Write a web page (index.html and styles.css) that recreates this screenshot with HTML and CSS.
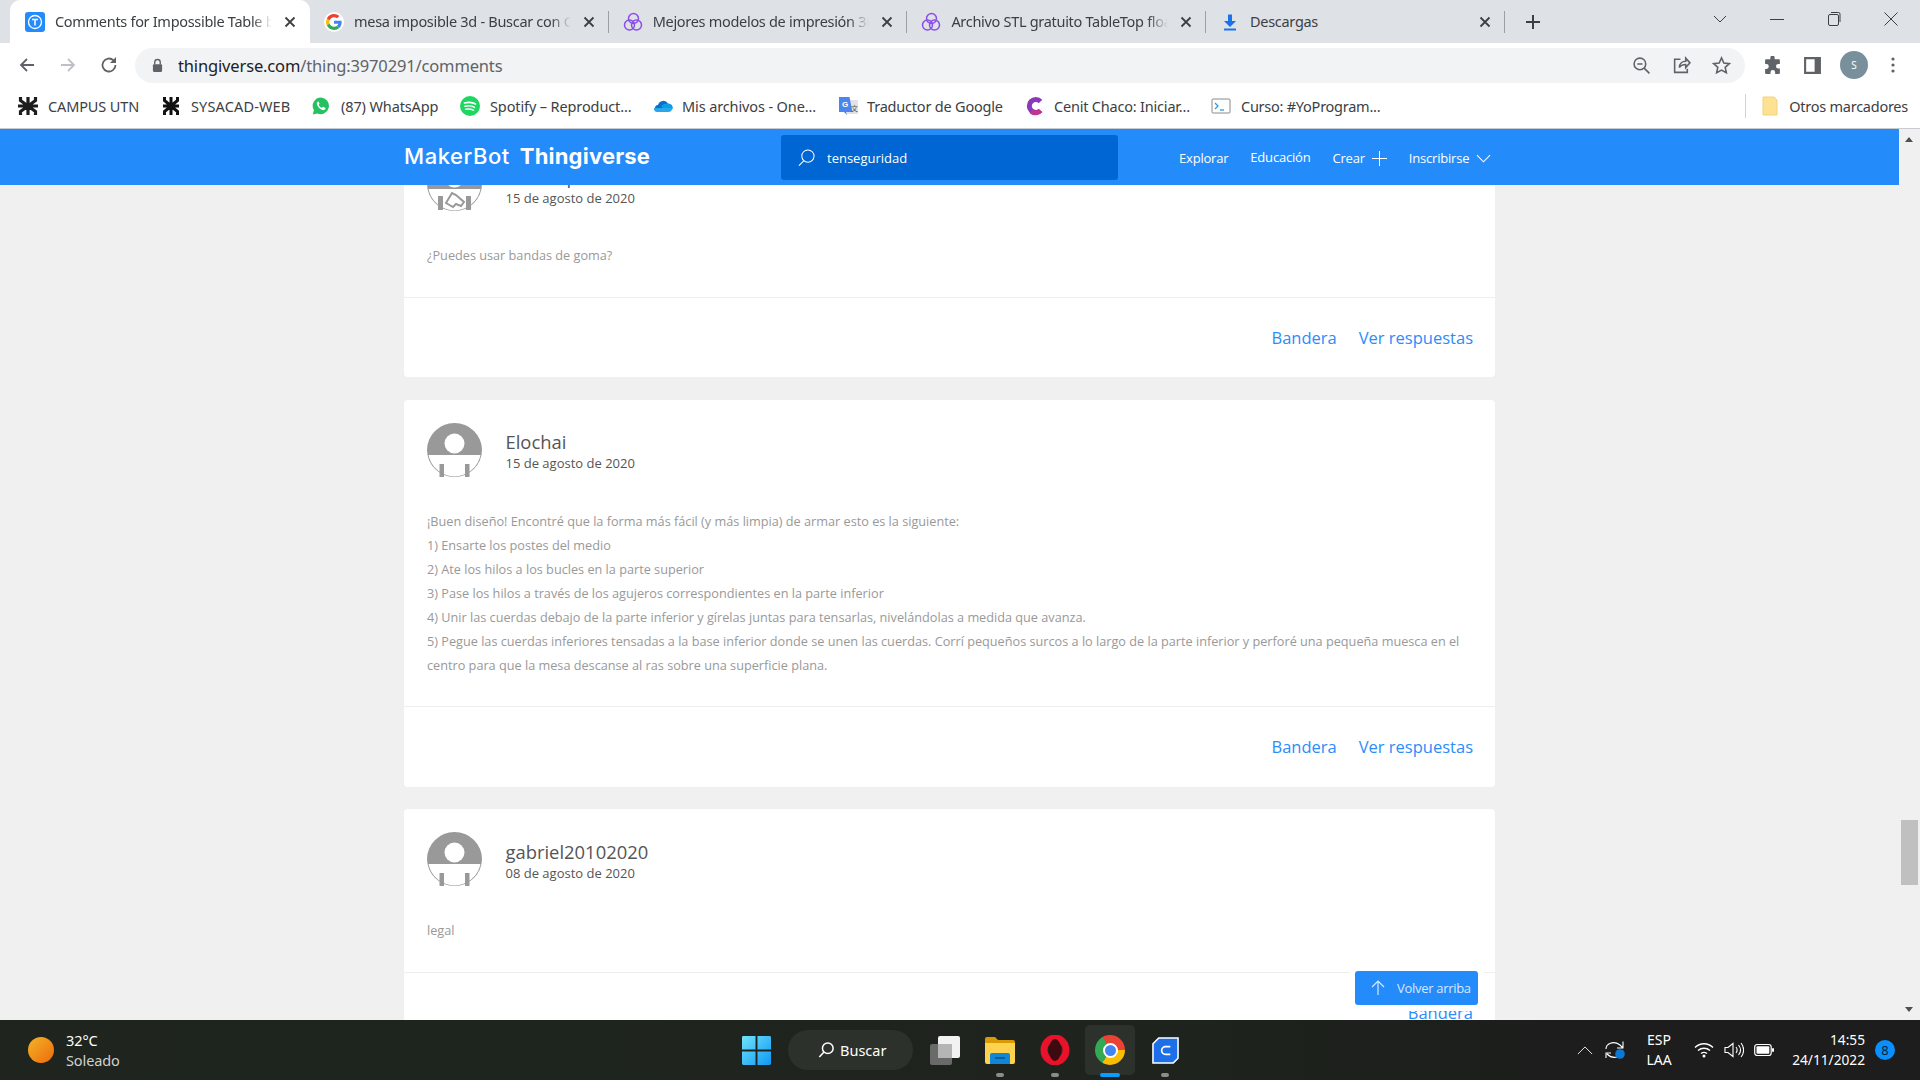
FILE: index.html
```html
<!DOCTYPE html>
<html lang="es">
<head>
<meta charset="utf-8">
<title>Comments for Impossible Table</title>
<link rel="stylesheet" href="styles.css">
</head>
<body>
<div class="tabstrip">
  <div class="tab tab-active">
    <svg class="fav" viewBox="0 0 20 20"><rect width="20" height="20" rx="3" fill="#248bfb"/><circle cx="10" cy="10" r="6.5" fill="none" stroke="#fff" stroke-width="1.3"/><path d="M7 7.4h6M10 7.4v6" stroke="#fff" stroke-width="1.5" fill="none"/></svg>
    <span class="tab-title">Comments for Impossible Table by TensegrityFan</span>
    <svg class="tab-x" viewBox="0 0 12 12"><path d="M1.5 1.5l9 9M10.5 1.5l-9 9"/></svg>
  </div>
  <div class="tab">
    <svg class="fav" viewBox="-6 -6 60 60"><circle cx="24" cy="24" r="30" fill="#fff"/><path fill="#EA4335" d="M24 9.5c3.54 0 6.71 1.22 9.21 3.6l6.85-6.85C35.9 2.38 30.47 0 24 0 14.62 0 6.51 5.38 2.56 13.22l7.98 6.19C12.43 13.72 17.74 9.5 24 9.5z"/><path fill="#4285F4" d="M46.98 24.55c0-1.57-.15-3.09-.38-4.55H24v9.02h12.94c-.58 2.96-2.26 5.48-4.78 7.18l7.73 6c4.51-4.18 7.09-10.36 7.09-17.65z"/><path fill="#FBBC05" d="M10.53 28.59c-.48-1.45-.76-2.99-.76-4.59s.27-3.14.76-4.59l-7.98-6.19C.92 16.46 0 20.12 0 24c0 3.88.92 7.54 2.56 10.78l7.97-6.19z"/><path fill="#34A853" d="M24 48c6.48 0 11.93-2.13 15.89-5.81l-7.73-6c-2.15 1.45-4.92 2.3-8.16 2.3-6.26 0-11.57-4.22-13.47-9.91l-7.98 6.19C6.51 42.62 14.62 48 24 48z"/></svg>
    <span class="tab-title">mesa imposible 3d - Buscar con Google</span>
    <svg class="tab-x" viewBox="0 0 12 12"><path d="M1.5 1.5l9 9M10.5 1.5l-9 9"/></svg>
  </div>
  <div class="tab">
    <svg class="fav" viewBox="0 0 20 20" fill="none" stroke="#8b4fe8" stroke-width="1.5"><circle cx="10.500" cy="6.500" r="5"/><circle cx="6.500" cy="13" r="5"/><circle cx="13.500" cy="13" r="5"/></svg>
    <span class="tab-title">Mejores modelos de impresión 3D para</span>
    <svg class="tab-x" viewBox="0 0 12 12"><path d="M1.5 1.5l9 9M10.5 1.5l-9 9"/></svg>
  </div>
  <div class="tab">
    <svg class="fav" viewBox="0 0 20 20" fill="none" stroke="#8b4fe8" stroke-width="1.5"><circle cx="10.500" cy="6.500" r="5"/><circle cx="6.500" cy="13" r="5"/><circle cx="13.500" cy="13" r="5"/></svg>
    <span class="tab-title">Archivo STL gratuito TableTop floating</span>
    <svg class="tab-x" viewBox="0 0 12 12"><path d="M1.5 1.5l9 9M10.5 1.5l-9 9"/></svg>
  </div>
  <div class="tab tab-last">
    <svg class="fav" viewBox="0 0 20 20" fill="#1a73e8"><path d="M8 2.500h4v6.500h4l-6 6-6-6h4z"/><rect x="4" y="16.500" width="12" height="2"/></svg>
    <span class="tab-title">Descargas</span>
    <svg class="tab-x" viewBox="0 0 12 12"><path d="M1.5 1.5l9 9M10.5 1.5l-9 9"/></svg>
  </div>
  <svg class="newtab" viewBox="0 0 16 16"><path d="M8 1v14M1 8h14"/></svg>
  <div class="winctl">
    <svg class="win-ic" viewBox="0 0 16 16"><path d="M2 5l6 6 6-6"/></svg>
    <svg class="win-ic" viewBox="0 0 16 16"><path d="M1 8.500h14"/></svg>
    <svg class="win-ic" viewBox="0 0 16 16"><rect x="2.500" y="3.500" width="10" height="11" rx="1.500"/><path d="M5 1.500h7.500a1.500 1.500 0 0 1 1.500 1.500v8"/></svg>
    <svg class="win-ic" viewBox="0 0 16 16"><path d="M1.500 1.500l13 13M14.500 1.500l-13 13"/></svg>
  </div>
</div>

<div class="toolbar">
  <svg class="nav-ic" viewBox="0 0 18 18"><path d="M16 9H3M9 3L3 9l6 6"/></svg>
  <svg class="nav-ic nav-off" viewBox="0 0 18 18"><path d="M2 9h13M9 3l6 6-6 6"/></svg>
  <svg class="nav-ic" viewBox="0 0 18 18"><path d="M15.500 9a6.500 6.500 0 1 1-2-4.700"/><path class="solid" d="M16 1v6h-6z"/></svg>
  <div class="omnibox">
    <svg class="lock" viewBox="0 0 12 16"><path d="M3 7V4.500a3 3 0 0 1 6 0V7" fill="none" stroke="#5f6368" stroke-width="1.500"/><rect x="1" y="6.500" width="10" height="8.500" rx="1.200" fill="#5f6368"/></svg>
    <span class="url"><span class="url-host">thingiverse.com</span>/thing:3970291/comments</span>
    <span class="omni-spacer"></span>
    <svg class="omni-ic" viewBox="0 0 18 18"><circle cx="7.500" cy="7.500" r="5.500"/><path d="M5 7.500h5M11.500 11.500l5 5"/></svg>
    <svg class="omni-ic" viewBox="0 0 18 18"><path d="M8 3H2.500v12.500h12V12M7 11c0-4 3-6 6-6V2l4 4.500-4 4.500V8c-3 0-5 1-6 3z"/></svg>
    <svg class="omni-ic" viewBox="0 0 18 18"><path d="M9 1.800l2.200 4.800 5.200.6-3.900 3.500 1.100 5.200L9 13.300l-4.600 2.600 1.100-5.200L1.600 7.200l5.200-.6z"/></svg>
  </div>
  <svg class="tool-ic" viewBox="0 0 18 18"><path fill="#5f6368" d="M7 1.500a2 2 0 0 1 4 0V3h4a1 1 0 0 1 1 1v3.500h-1.500a2.200 2.200 0 0 0 0 4.400H16V16a1 1 0 0 1-1 1h-3.500v-1.500a2.200 2.200 0 0 0-4.400 0V17H3a1 1 0 0 1-1-1v-3.800h1.200a2.300 2.300 0 0 0 0-4.600H2V4a1 1 0 0 1 1-1h4z"/></svg>
  <svg class="tool-ic" viewBox="0 0 18 18"><path fill="#5f6368" d="M1 1h16v16H1zM3 3v12h8V3z"/></svg>
  <div class="profile">S</div>
  <svg class="tool-dots" viewBox="0 0 4 16"><circle cx="2" cy="2" r="1.600"/><circle cx="2" cy="8" r="1.600"/><circle cx="2" cy="14" r="1.600"/></svg>
</div>

<div class="bookmarks">
  <div class="bm bm-campus">
    <svg class="bm-ic bm-utn-wide" viewBox="0 0 20 18"><path d="M10 0v18M2.500 0v3.500L10 9l7.500-5.500V0M2.500 18v-3.500L10 9l7.500 5.500V18M0 9h20" stroke="#1c1c1c" stroke-width="3.200" fill="none"/></svg>
    <span>CAMPUS UTN</span>
  </div>
  <div class="bm bm-sysacad">
    <svg class="bm-ic" viewBox="0 0 18 18"><path d="M9 0v18M2.500 0v3.500L9 9l6.500-5.500V0M2.500 18v-3.500L9 9l6.500 5.500V18M1 9h16" stroke="#111" stroke-width="3" fill="none"/></svg>
    <span>SYSACAD-WEB</span>
  </div>
  <div class="bm bm-wa">
    <svg class="bm-ic" viewBox="0 0 18 18"><path fill="#25c05f" d="M9 .5a8.300 8.300 0 0 0-7.100 12.600L.8 17.500l4.500-1.100A8.300 8.300 0 1 0 9 .5z"/><path fill="#fff" d="M6 4.500c-.9.500-1.500 1.700-1 3 .8 2.600 3 4.800 5.500 5.500 1.400.4 2.500-.2 3-1.200.2-.5 0-.9-.4-1.100l-1.600-.8c-.4-.2-.7 0-.9.300l-.5.600c-2-.6-3-1.900-3.400-3.100l.6-.6c.2-.3.300-.5.100-.9l-.7-1.500c-.2-.3-.5-.4-.7-.2z"/></svg>
    <span>(87) WhatsApp</span>
  </div>
  <div class="bm bm-sp">
    <svg class="bm-ic bm-ic-lg" viewBox="0 0 20 20"><circle cx="10" cy="10" r="10" fill="#1ed760"/><path d="M4.500 7c4-1 8-.8 11 1M5 10.300c3.500-.8 7-.6 9.500 1M5.700 13.300c3-.6 5.500-.4 7.800.9" stroke="#fff" stroke-width="1.600" fill="none" stroke-linecap="round"/></svg>
    <span>Spotify – Reproduct...</span>
  </div>
  <div class="bm bm-od">
    <svg class="bm-ic bm-ic-lg" viewBox="0 0 20 14"><path fill="#0a6fc9" d="M5 6a5.500 5.500 0 0 1 10-1.500L9 11 2 10C1.500 8 3 6 5 6z"/><path fill="#0f9be8" d="M15 4.500a4.200 4.200 0 0 1 4.500 5.500L11 10l-3-3c2.500-2 4-2.800 7-2.500z"/><path fill="#28a8ea" d="M1 9h18.500c-.5 2.500-2 4-4 4H4c-2 0-3.500-2-3-4z"/></svg>
    <span>Mis archivos - One...</span>
  </div>
  <div class="bm bm-tr">
    <svg class="bm-ic bm-ic-lg" viewBox="0 0 20 20"><rect x="8" y="4" width="12" height="14" rx="1" fill="#e3e3e3"/><path fill="#4a86ee" d="M1 1h10.500l3 15H8l1 3-3-3H1z"/><text x="4" y="11" font-size="8" font-weight="700" fill="#fff" font-family="Liberation Sans">G</text><text x="13" y="15" font-size="7" fill="#555" font-family="Noto Sans CJK SC">文</text></svg>
    <span>Traductor de Google</span>
  </div>
  <div class="bm bm-ce">
    <svg class="bm-ic bm-ic-lg" viewBox="0 0 20 20"><path d="M15.500 5.500A6.500 6.500 0 1 0 15.500 14.500" fill="none" stroke="#8a3ab9" stroke-width="5"/><path d="M15.500 14.500a6.500 6.500 0 0 1-9 1" fill="none" stroke="#c2368f" stroke-width="5"/></svg>
    <span>Cenit Chaco: Iniciar...</span>
  </div>
  <div class="bm bm-cu">
    <svg class="bm-ic bm-ic-lg" viewBox="0 0 20 18"><rect x="1" y="2" width="18" height="14" rx="1" fill="#fff" stroke="#8a8a8a"/><path d="M4 6l3 3-3 3" fill="none" stroke="#2a9fd6" stroke-width="1.300"/><path d="M9 13h4" stroke="#2a9fd6" stroke-width="1.300"/></svg>
    <span>Curso: #YoProgram...</span>
  </div>
  <span class="bm-spacer"></span>
  <span class="bm-sep"></span>
  <div class="bm bm-other">
    <svg class="bm-ic bm-folder" viewBox="0 0 16 20"><path fill="#fde293" stroke="#f5d27a" d="M1 1h11l3 3v15H1z"/></svg>
    <span>Otros marcadores</span>
  </div>
</div>

<div class="viewport">
  <div class="page">
    <header class="sitebar">
      <div class="logo"><span class="logo-mb">MakerBot</span><span class="logo-th">Thingiverse</span></div>
      <div class="search">
        <svg class="search-ic" viewBox="0 0 18 18"><circle cx="10.500" cy="7.500" r="6.500"/><path d="M6 12.500l-5 5"/></svg>
        <span>tenseguridad</span>
      </div>
      <nav class="sitenav">
        <span>Explorar</span>
        <span class="nav-up">Educación</span>
        <span class="nav-pair">Crear <svg class="nav-svg" viewBox="0 0 16 16"><path d="M8 0v16M0 8h16"/></svg></span>
        <span class="nav-pair">Inscribirse <svg class="nav-svg" viewBox="0 0 16 10"><path d="M1 1.500l7 7 7-7"/></svg></span>
      </nav>
    </header>

    <main class="content">
      <article class="card">
        <div class="card-main">
          <div class="who">
            <svg class="avatar" viewBox="0 0 55 54"><ellipse cx="27.500" cy="27" rx="27.500" ry="27" fill="#999"/><circle cx="27.500" cy="20.500" r="10" fill="#fff"/><path fill="#fff" d="M1.500 32H53.500A26.500 26.500 0 0 1 1.500 32Z"/><path fill="#999" d="M11 39h5v14h-5zM39 39h5v14h-5z"/><path d="M19 46l6-10 4 2 8 7-3 4-5-2-3 3z" fill="#fff" stroke="#999" stroke-width="2"/></svg>
            <div class="who-text"><div class="name">Ramonpe</div><div class="date">15 de agosto de 2020</div></div>
          </div>
          <p class="msg">¿Puedes usar bandas de goma?</p>
        </div>
        <div class="card-foot"><a class="act">Bandera</a><a class="act">Ver respuestas</a></div>
      </article>

      <article class="card">
        <div class="card-main">
          <div class="who">
            <svg class="avatar" viewBox="0 0 55 54"><ellipse cx="27.500" cy="27" rx="27.500" ry="27" fill="#999"/><circle cx="27.500" cy="20.500" r="10" fill="#fff"/><path fill="#fff" d="M1.500 32H53.500A26.500 26.500 0 0 1 1.500 32Z"/><path fill="#999" d="M12.500 41h4.500v13h-4.500zM38 41h4.500v13H38z"/></svg>
            <div class="who-text"><div class="name">Elochai</div><div class="date">15 de agosto de 2020</div></div>
          </div>
          <p class="msg">¡Buen diseño! Encontré que la forma más fácil (y más limpia) de armar esto es la siguiente:<br>1) Ensarte los postes del medio<br>2) Ate los hilos a los bucles en la parte superior<br>3) Pase los hilos a través de los agujeros correspondientes en la parte inferior<br>4) Unir las cuerdas debajo de la parte inferior y gírelas juntas para tensarlas, nivelándolas a medida que avanza.<br>5) Pegue las cuerdas inferiores tensadas a la base inferior donde se unen las cuerdas. Corrí pequeños surcos a lo largo de la parte inferior y perforé una pequeña muesca en el centro para que la mesa descanse al ras sobre una superficie plana.</p>
        </div>
        <div class="card-foot"><a class="act">Bandera</a><a class="act">Ver respuestas</a></div>
      </article>

      <article class="card">
        <div class="card-main">
          <div class="who">
            <svg class="avatar" viewBox="0 0 55 54"><ellipse cx="27.500" cy="27" rx="27.500" ry="27" fill="#999"/><circle cx="27.500" cy="20.500" r="10" fill="#fff"/><path fill="#fff" d="M1.500 32H53.500A26.500 26.500 0 0 1 1.500 32Z"/><path fill="#999" d="M12.500 41h4.500v13h-4.500zM38 41h4.500v13H38z"/></svg>
            <div class="who-text"><div class="name">gabriel20102020</div><div class="date">08 de agosto de 2020</div></div>
          </div>
          <p class="msg">legal</p>
        </div>
        <div class="card-foot"><a class="act">Bandera</a></div>
      </article>
    </main>

    <button class="totop">
      <svg class="totop-ic" viewBox="0 0 16 16"><path d="M8 15V1M2 7l6-6 6 6"/></svg>
      <span>Volver arriba</span>
    </button>
  </div>
  <div class="scrollbar">
    <span class="sb-up"></span>
    <span class="sb-thumb"></span>
    <span class="sb-down"></span>
  </div>
</div>

<footer class="taskbar">
  <div class="weather">
    <span class="sun"></span>
    <div class="weather-text"><div>32°C</div><div class="weather-sub">Soleado</div></div>
  </div>
  <div class="tb-center">
    <svg class="tb-win" viewBox="0 0 30 30"><defs><linearGradient id="wg" x1="0" y1="0" x2="1" y2="1"><stop offset="0" stop-color="#6fe3fb"/><stop offset="1" stop-color="#0f97f5"/></linearGradient></defs><path fill="url(#wg)" d="M0 1.500A1.500 1.500 0 0 1 1.500 0H14v14H0zM16 0h12.500A1.500 1.500 0 0 1 30 1.500V14H16zM0 16h14v14H1.500A1.500 1.500 0 0 1 0 28.500zM16 16h14v12.500a1.500 1.500 0 0 1-1.500 1.500H16z"/></svg>
    <div class="tb-search">
      <svg class="tb-search-ic" viewBox="0 0 18 18"><circle cx="11" cy="7" r="6"/><path d="M6.500 11.500L1.500 17"/></svg>
      <span>Buscar</span>
    </div>
    <svg class="tb-task" viewBox="0 0 30 30"><rect x="8" y="1" width="22" height="22" rx="2" fill="#f2f2f2"/><rect x="0" y="9" width="22" height="21" rx="2" fill="#6a6a6a"/><rect x="8" y="9" width="14" height="14" fill="#b5b5b5"/></svg>
    <div class="tb-app">
      <svg class="tb-ic" viewBox="0 0 30 28"><path fill="#d99a05" d="M0 3a2 2 0 0 1 2-2h8l3 3h15a2 2 0 0 1 2 2v6H0z"/><path fill="#fbd34f" d="M0 7h30v19a2 2 0 0 1-2 2H2a2 2 0 0 1-2-2z"/><path fill="#0f86d6" d="M5 19a2 2 0 0 1 2-2h16a2 2 0 0 1 2 2v9H5z"/><path stroke="#07508a" stroke-width="1.500" d="M10 22h10"/></svg>
      <span class="tb-dot"></span>
    </div>
    <div class="tb-app">
      <svg class="tb-ic" viewBox="0 0 30 30"><ellipse cx="15" cy="15" rx="11" ry="12" fill="none" stroke="#e8132b" stroke-width="7"/><ellipse cx="15" cy="15" rx="6" ry="11" fill="#3d0a10"/></svg>
      <span class="tb-dot"></span>
    </div>
    <div class="tb-app tb-active">
      <span class="chrome"><span class="chrome-in"></span></span>
      <span class="tb-bar"></span>
    </div>
    <div class="tb-app">
      <svg class="tb-ic tb-c" viewBox="0 0 28 28"><path fill="#1c6fe8" stroke="#fff" stroke-width="1.600" d="M7 1h20v21l-5 5H1V7z"/><path d="M19 10h-5a4 4 0 0 0 0 8h5" fill="none" stroke="#fff" stroke-width="1.800"/></svg>
      <span class="tb-dot"></span>
    </div>
  </div>
  <div class="tray">
    <svg class="tray-chev" viewBox="0 0 18 10"><path d="M1 9l8-8 8 8"/></svg>
    <svg class="tray-sync" viewBox="0 0 20 20"><path d="M1 9c0-5 7-9 14-4l3 3M18 1.500V8h-6M12 17c-4 1-8-1-10-3M1 18v-5h5" fill="none" stroke="#fff" stroke-width="1.100"/><circle cx="15" cy="14" r="4.800" fill="#0a78d7"/></svg>
    <div class="tray-lang"><div>ESP</div><div>LAA</div></div>
    <svg class="tray-ic" viewBox="0 0 20 16"><path d="M1 5.500c5-5 13-5 18 0M4 8.500c3.500-3 8.500-3 12 0M7 11.500c2-1.500 4-1.500 6 0" fill="none" stroke="#fff" stroke-width="1.400"/><circle cx="10" cy="14" r="1.500" fill="#fff"/></svg>
    <svg class="tray-ic" viewBox="0 0 20 16"><path d="M1 5.500h3l5-4v13l-5-4H1zM12 5c1.500 2 1.500 4 0 6M14.500 3c2.500 3 2.500 7 0 10M17 1c3.500 4 3.500 10 0 14" fill="none" stroke="#fff" stroke-width="1.100"/></svg>
    <svg class="tray-ic" viewBox="0 0 20 14"><rect x=".7" y="1.500" width="16.500" height="11" rx="2.500" fill="none" stroke="#fff" stroke-width="1.200"/><rect x="2.500" y="3.300" width="12.800" height="7.400" rx="1" fill="#fff"/><rect x="18" y="5" width="2" height="4" rx="1" fill="#fff"/></svg>
    <div class="clock"><div>14:55</div><div>24/11/2022</div></div>
    <span class="notif">8</span>
  </div>
</footer>
</body>
</html>
```
FILE: styles.css
```css
* { box-sizing: border-box; }
html, body { margin: 0; height: 100%; }
body {
  width: 1920px; height: 1080px; overflow: hidden;
  display: flex; flex-direction: column;
  font-family: "Noto Sans", "Open Sans", sans-serif;
  background: #f0f0f0;
}
svg { display: block; flex: none; }

/* tab strip */
.tabstrip { height: 43px; background: #dee1e6; display: flex; align-items: center; padding-left: 10px; flex: none; position: relative; }
.tab { width: 298.700px; height: 43px; display: flex; align-items: center; padding: 0 14px 0 14px; position: relative; }
.tab-active { padding-left: 15px; }
.tab:not(.tab-active)::after { content: ""; position: absolute; right: 0; top: 11px; height: 22px; width: 1px; background: #9aa0a6; }
.tab-active { width: 300px; background: #fff; border-radius: 10px 10px 0 0; }
.fav { width: 20px; height: 20px; margin-right: 10px; }
.tab-title {
  flex: 1; min-width: 0; font-size: 14.5px; line-height: 20px; padding-bottom: 2px; color: #3c4043; white-space: nowrap; overflow: hidden;
  letter-spacing: -.3px;
  -webkit-mask-image: linear-gradient(90deg, #000 90%, transparent 99%);
  mask-image: linear-gradient(90deg, #000 90%, transparent 99%);
}
.tab-last .tab-title { -webkit-mask-image: none; mask-image: none; }
.tab-x { width: 12px; height: 12px; margin-left: 10px; fill: none; stroke: #3c4043; stroke-width: 1.800; }
.newtab { width: 16px; height: 16px; margin-left: 20px; fill: none; stroke: #3c4043; stroke-width: 2; }
.winctl { margin-left: auto; display: flex; align-items: center; gap: 41px; padding-right: 21px; height: 43px; padding-bottom: 6px; }
.win-ic { width: 16px; height: 16px; fill: none; stroke: #3c4043; stroke-width: 1; }

/* toolbar */
.toolbar { height: 42px; background: #fff; display: flex; align-items: center; padding: 2px 0 0 18px; flex: none; }
.nav-ic { width: 18px; height: 18px; margin-right: 23px; fill: none; stroke: #5f6368; stroke-width: 1.800; }
.nav-ic .solid { fill: #5f6368; stroke: none; }
.nav-off { stroke: #bdc1c6; }
.omnibox { width: 1610px; height: 35px; margin-left: -6px; background: #f1f3f4; border-radius: 18px; display: flex; align-items: center; padding: 0 14px 0 17px; }
.lock { width: 11px; height: 15px; margin-right: 15px; }
.url { font-size: 16.500px; color: #5f6368; letter-spacing: -.15px; }
.url-host { color: #202124; }
.omni-spacer { flex: 1; }
.omni-ic { width: 19px; height: 19px; margin-left: 21px; fill: none; stroke: #5f6368; stroke-width: 1.500; }
.tool-ic { width: 19px; height: 19px; margin-left: 18px; }
.tool-ic + .tool-ic { margin-left: 21px; }
.profile { width: 28px; height: 28px; margin-left: 18px; border-radius: 50%; background: #78909c; color: #fff; font-size: 10px; display: flex; align-items: center; justify-content: center; }
.tool-dots { width: 4px; height: 16px; margin-left: 23px; fill: #5f6368; }

/* bookmarks */
.bookmarks { height: 44px; background: #fff; border-bottom: 1px solid #c8cbcf; display: flex; align-items: center; padding-left: 18px; flex: none; padding-bottom: 2px; }
.bm { display: flex; align-items: center; gap: 9px; font-size: 14.500px; line-height: 20px; color: #3c4043; white-space: nowrap; letter-spacing: -.12px; }
.bm-campus { width: 144px; gap: 10px; }
.bm-sysacad { width: 150px; gap: 11px; letter-spacing: .15px; }
.bm-wa { width: 148px; gap: 11px; }
.bm-sp { width: 193px; gap: 10px; }
.bm-od { width: 185px; }
.bm-tr { width: 187px; letter-spacing: -.2px; }
.bm-ce { width: 186px; letter-spacing: -.2px; }
.bm-cu { letter-spacing: -.25px; gap: 10px; }
.bm-ic { width: 18px; height: 18px; }
.bm-utn-wide { width: 20px; }
.bm-ic-lg { width: 20px; height: 20px; }
.bm-spacer { flex: 1; }
.bm-sep { width: 1px; height: 24px; background: #d0d3d6; margin-right: 16px; }
.bm-other { padding-right: 12px; gap: 11px; letter-spacing: -.25px; }
.bm-folder { width: 16px; height: 20px; }

/* page */
.viewport { flex: 1; min-height: 0; display: flex; }
.page { flex: 1; min-width: 0; position: relative; overflow: hidden; }
.sitebar { position: relative; z-index: 2; height: 56px; background: #248bfb; display: flex; align-items: center; color: #fff; padding-left: 404px; }
.logo { width: 377px; display: flex; gap: 10px; font-size: 22px; line-height: 26px; padding-bottom: 3px; color: #fff; font-family: "Inter", sans-serif; white-space: nowrap; }
.logo-mb { font-weight: 500; letter-spacing: .55px; }
.logo-th { font-weight: 700; letter-spacing: .2px; }
.search { width: 337px; height: 45px; background: #0066d3; border-radius: 3px; display: flex; align-items: center; padding-left: 17px; font-size: 13px; gap: 12px; font-family: "Open Sans", sans-serif; }
.search span, .sitenav > span { position: relative; top: 1px; }
.search-ic { width: 17px; height: 17px; fill: none; stroke: #fff; stroke-width: 1.100; }
.sitenav { margin-left: 61px; display: flex; align-items: center; gap: 22px; font-size: 13px; font-family: "Open Sans", sans-serif; letter-spacing: -.2px; }
.sitenav > .nav-up { top: 0; }
.nav-pair { display: flex; align-items: center; gap: 7px; }
.nav-svg { width: 15px; height: 15px; fill: none; stroke: #fff; stroke-width: 1.100; }

.content { width: 1091px; margin: -51px 0 0 404px; display: flex; flex-direction: column; gap: 22.500px; font-family: "Open Sans", sans-serif; }
.card { background: #fff; border-radius: 4px; flex: none; }
.card-main { padding: 21px 23px 0; border-bottom: 1px solid #eeeeee; }
.who { display: flex; align-items: center; gap: 24px; height: 54px; margin-top: 2px; }
.avatar { width: 55px; height: 54px; }
.who-text { display: flex; flex-direction: column; position: relative; top: 1px; }
.name { font-size: 18.400px; line-height: 25px; color: #555; margin-left: -.5px; }
.date { font-size: 13px; line-height: 18px; color: #555; margin-left: -.5px; }
.msg { margin: 0; padding: 32px 0 29.500px; font-size: 12.700px; line-height: 24px; color: #999; }
.card-foot { height: 79.500px; padding-right: 22px; display: flex; justify-content: flex-end; align-items: center; gap: 22px; }
.act { font-size: 16.500px; color: #2b8cfb; }

.totop { position: absolute; right: 421px; bottom: 15px; z-index: 3; width: 123px; height: 34px; background: #248bfb; border: 0; border-radius: 3px; box-shadow: 0 0 0 6px #fff; display: flex; align-items: center; padding: 0 0 0 15px; gap: 11px; color: #d6e8ff; font-family: "Open Sans", sans-serif; font-size: 13px; letter-spacing: -.3px; white-space: nowrap; }
.totop-ic { width: 16px; height: 16px; fill: none; stroke: #d6e8ff; stroke-width: 1.200; }

.scrollbar { width: 21px; flex: none; position: relative; background: #f0f0f0; }
.sb-up, .sb-down { position: absolute; left: 6px; width: 0; height: 0; border-left: 4.500px solid transparent; border-right: 4.500px solid transparent; }
.sb-up { top: 8px; border-bottom: 5px solid #505050; }
.sb-down { bottom: 8px; border-top: 5px solid #505050; }
.sb-thumb { position: absolute; left: 2px; top: 691px; width: 17px; height: 65px; background: #c0c0c0; }

/* taskbar */
.taskbar { height: 60px; flex: none; position: relative; background: linear-gradient(90deg, #1f241f 0, #1e241d 60%, #1c1d1c 82%); display: flex; align-items: center; color: #fff; font-family: "Noto Sans", sans-serif; }
.weather { position: absolute; left: 28px; top: 0; height: 60px; display: flex; align-items: center; gap: 12px; font-size: 14.500px; line-height: 20px; letter-spacing: -.1px; }
.sun { width: 26px; height: 26px; border-radius: 50%; background: linear-gradient(135deg, #f3b426, #ee6a0c); }
.weather-sub { color: #d0d0d0; }
.tb-center { margin-left: 742px; display: flex; align-items: center; height: 60px; }
.tb-win { width: 29px; height: 29px; }
.tb-search { width: 125px; height: 40px; margin-left: 17px; background: #2c312c; border-radius: 20px; display: flex; align-items: center; padding-left: 30px; gap: 6px; font-size: 14.500px; }
.tb-search-ic { width: 16px; height: 16px; fill: none; stroke: #fff; stroke-width: 1.700; }
.tb-task { width: 30px; height: 30px; margin-left: 17px; margin-right: 15px; }
.tb-app { width: 50px; height: 50px; margin-right: 5px; border-radius: 5px; position: relative; display: flex; align-items: center; justify-content: center; }
.tb-ic { width: 30px; height: 30px; }
.tb-c { width: 27px; height: 27px; }
.tb-active { background: #2c312c; }
.tb-dot { position: absolute; left: 21px; bottom: -2px; width: 8px; height: 4px; border-radius: 2px; background: #8a8d8a; }
.tb-bar { position: absolute; left: 15px; bottom: -2px; width: 20px; height: 4px; border-radius: 2px; background: #0a9cff; }
.chrome { width: 30px; height: 30px; border-radius: 50%; background: conic-gradient(#ea4335 0deg 90deg, #fbbc04 90deg 210deg, #34a853 210deg 330deg, #ea4335 330deg 360deg); display: flex; align-items: center; justify-content: center; }
.chrome-in { width: 15px; height: 15px; border-radius: 50%; background: #4285f4; border: 2.500px solid #fff; }
.tray { position: absolute; left: 1577px; top: 0; height: 60px; display: flex; align-items: center; }
.tray-chev { width: 16px; height: 9px; fill: none; stroke: #e8e8e8; stroke-width: 1.100; }
.tray-sync { width: 20px; height: 20px; margin-left: 12px; }
.tray-lang { margin-left: 19px; width: 30px; text-align: center; font-size: 14px; line-height: 20px; }
.tray-ic { width: 20px; height: 16px; margin-left: 10px; }
.tray-lang + .tray-ic { margin-left: 20px; }
.clock { width: 91px; text-align: right; font-size: 13.700px; line-height: 20px; }
.notif { width: 20px; height: 20px; margin-left: 10px; border-radius: 50%; background: #0a8fff; color: #10202f; font-size: 13px; display: flex; align-items: center; justify-content: center; }
```
